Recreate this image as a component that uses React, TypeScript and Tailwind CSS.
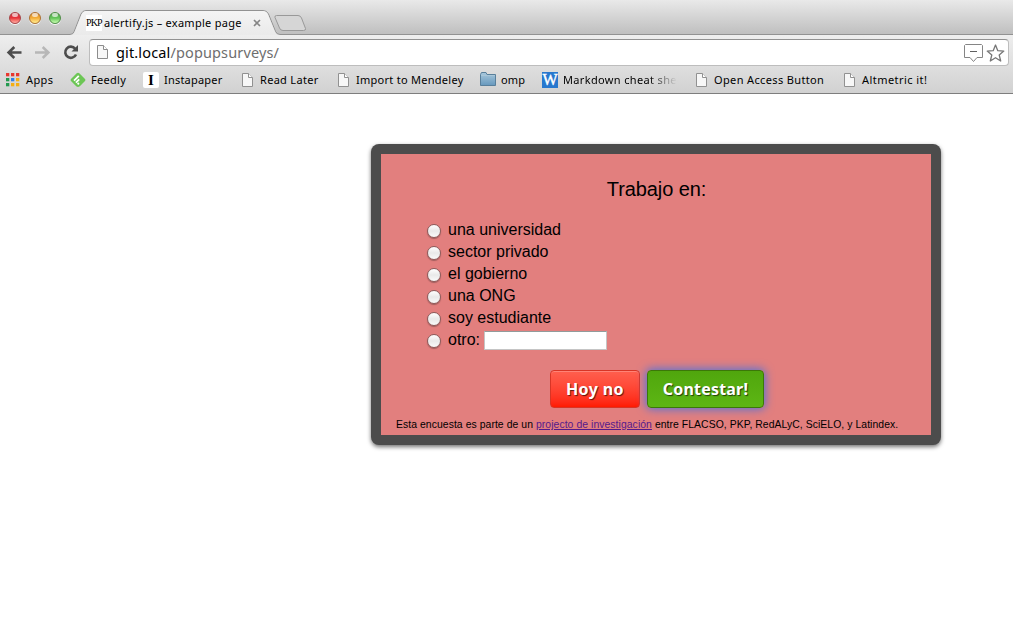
import React from "react";

const ui = "font-['Noto_Sans','Open_Sans',sans-serif]";

function PageIcon({ className = "" }: { className?: string }) {
  return (
    <svg className={`h-4 w-4 shrink-0 ${className}`} viewBox="0 0 16 16">
      <path d="M2.5 1.5H8.5L12.5 5.5V14.5H2.5Z" fill="#f7f7f7" stroke="#919191" />
      <path d="M8.5 1.5V5.5H12.5" fill="#fff" stroke="#919191" />
    </svg>
  );
}

function AppsIcon() {
  const colors = ["#e8382f", "#e8382f", "#e8382f", "#23994f", "#2f80e8", "#f4ae13", "#23994f", "#f4ae13", "#f4ae13"];
  return (
    <svg className="h-4 w-4 shrink-0" viewBox="0 0 16 16">
      {colors.map((c, i) => (
        <rect key={i} x={(i % 3) * 5} y={1 + Math.floor(i / 3) * 5} width="3.3" height="3.3" fill={c} />
      ))}
    </svg>
  );
}

function FeedlyIcon() {
  return (
    <svg className="h-4 w-4 shrink-0" viewBox="0 0 16 16">
      <path d="M6.7 1.3Q8 0.2 9.3 1.3L15 7Q16 8 15 9L9.8 14.3Q9 15 8 15T6.2 14.3L1 9Q0 8 1 7Z" fill="#6cc655" />
      <path d="M4 8.6L8.8 3.8M5.9 10.6L9.2 7.3M7.6 12.3L8.9 11" stroke="#fff" strokeWidth="1.8" />
    </svg>
  );
}

function FolderIcon() {
  return (
    <svg className="h-4 w-4 shrink-0" viewBox="0 0 16 16">
      <defs>
        <linearGradient id="folder" x2="0" y2="1">
          <stop stopColor="#a9c8dc" />
          <stop offset="1" stopColor="#6698bd" />
        </linearGradient>
      </defs>
      <path d="M.5 13.5V2.5L1.5 .5H6L7 2.5H15.5V13.5Z" fill="url(#folder)" stroke="#587f9b" />
      <path d="M1 3.5H15" stroke="#a9c6d8" />
    </svg>
  );
}

function Bookmark({ width, icon, label, text }: { width: string; icon: React.ReactNode; label: string; text: string }) {
  return (
    <div className={`flex h-full shrink-0 items-center ${width}`}>
      {icon}
      <span className={`whitespace-nowrap text-[11px] leading-4 text-black ${text}`}>{label}</span>
    </div>
  );
}

function Light({ color }: { color: string }) {
  return (
    <span className={`relative h-3 w-3 rounded-full border shadow-[0_1px_0_#f6f6f6] ${color}`}>
      <span className="absolute left-[2px] top-0 h-1 w-1.5 rounded-full bg-white/65" />
    </span>
  );
}

function Option({ label, children }: { label: string; children?: React.ReactNode }) {
  return (
    <label className="flex h-[22px] items-center">
      <span className="mt-[3px] h-[14px] w-[14px] rounded-full border border-[#8b5c5c] bg-linear-to-b from-white via-[#e9e9e9] to-[#fafafa] shadow-[0_1px_1px_#a05c5c]" />
      <span className="ml-[7px] mt-[2px] whitespace-nowrap text-[16px] leading-[22px]">{label}</span>
      {children}
    </label>
  );
}

export default function App() {
  return (
    <div className="h-[641px] w-[1013px] overflow-hidden bg-white text-black">
      <header className={`flex h-[94px] flex-col border-b border-[#7e7e7e] ${ui}`}>
        <div className="relative flex h-[35px] shrink-0 bg-linear-to-b from-[#e9e9e9] to-[#bebebe]">
          <svg className="absolute left-0 top-0 h-[35px] w-[1013px]" viewBox="0 0 1013 35" fill="none">
            <defs>
              <linearGradient id="tab" x2="0" y2="1">
                <stop stopColor="#f4f4f4" />
                <stop offset="1" stopColor="#eaeaea" />
              </linearGradient>
            </defs>
            <path d="M0 34.5H70Q73 34.5 74.2 31.5L81 14Q82.5 10.5 86 10.5H263Q267 10.5 268.5 14L275.5 31.5Q277 34.5 280 34.5H1013" fill="none" stroke="#929292" />
            <path d="M70 35Q73 35 74.7 31.5L81.5 14.5Q83 11 86 11H263Q266.5 11 268 14.5L275 31.5Q276.5 35 280 35Z" fill="url(#tab)" />
            <path d="M276.5 15.5H298Q300.5 15.5 301.5 18L305.5 28.5Q306 30.5 303.5 30.5H283Q280.5 30.5 279.5 28L275 17.5Q274.5 15.5 276.5 15.5Z" fill="#d6d6d6" stroke="#999" />
          </svg>
          <div className="relative flex w-full items-start">
            <div className="ml-[9px] mt-3 flex gap-2">
              <Light color="border-[#a84245] bg-linear-to-b from-[#c83d45] via-[#e8303a] to-[#ffaca5]" />
              <Light color="border-[#ae7030] bg-linear-to-b from-[#d18b38] via-[#f5ae36] to-[#ffef91]" />
              <Light color="border-[#4e8d46] bg-linear-to-b from-[#5ba253] via-[#62c659] to-[#c9ffb1]" />
            </div>
            <span className="ml-[25px] mt-[15px] h-4 w-4 whitespace-nowrap bg-white font-['Liberation_Serif',serif] text-[10px] leading-4 tracking-[-0.9px]">PKP</span>
            <span className="ml-[2px] mt-[15px] w-[149px] whitespace-nowrap text-[11px] leading-4 tracking-[0.27px]">alertify.js – example page</span>
            <svg className="mt-[19px] h-2 w-2" viewBox="0 0 8 8"><path d="M1 1L7 7M7 1L1 7" stroke="#858585" strokeWidth="1.7" /></svg>
          </div>
        </div>

        <div className="flex h-[32px] shrink-0 items-start bg-linear-to-b from-[#eeeeee] to-[#dedede] pl-[6px] pr-1 pt-1">
          <svg className="mt-[5px] h-4 w-[80px] shrink-0" viewBox="0 0 80 16" fill="none">
            <path d="M15.5 8.5H3M8.3 3L2.6 8.5L8.3 14" stroke="#4d4d4d" strokeWidth="2.6" />
            <path d="M29 8.5H42M36.700 3L42.400 8.500L36.700 14" stroke="#b7b7b7" strokeWidth="2.5" />
            <path d="M69.2 4.7A5.6 5.6 0 1 0 70 10.5" stroke="#4d4d4d" strokeWidth="2.6" />
            <path d="M72 1V7.5H65.5Z" fill="#4d4d4d" />
          </svg>
          <div className="ml-[3px] flex h-[27px] flex-1 items-center rounded-[4px] border border-[#bdbdbd] border-t-[#919191] bg-white pl-1">
            <svg className="-mt-px ml-[3px] h-4 w-[12px]" viewBox="0 0 12 16">
              <path d="M.5 1.5H6.5L10.5 5.5V14.5H.5Z" fill="#f7f7f7" stroke="#8c8c8c" />
              <path d="M6.5 1.5V5.5H10.5" fill="#fff" stroke="#8c8c8c" />
            </svg>
            <span className="-mt-[2px] ml-[7px] flex-1 whitespace-nowrap text-[14.5px] leading-5 tracking-[0.14px] text-black">git.local<span className="text-[#6e6e6e]">/popupsurveys/</span></span>
            <svg className="mr-[3px] h-5 w-[41px]" viewBox="0 0 41 20" fill="none">
              <path d="M1.5 1.5H17.5L18.5 2.5V14.5H13L9.5 18.5L6 14.5H.5V2.5Z" stroke="#858585" />
              <path d="M6 8.5H13" stroke="#606060" />
              <path d="M31.500 2L33.800 7.700L39.800 8.100L35.200 12L36.700 18L31.500 14.700L26.300 18L27.800 12L23.200 8.100L29.200 7.700Z" stroke="#777" strokeWidth="1.3" strokeLinejoin="round" />
            </svg>
          </div>
        </div>

        <nav className="flex h-[26px] shrink-0 items-center overflow-hidden bg-linear-to-b from-[#dedede] to-[#d1d1d1] pl-[6px]">
          <Bookmark width="w-[64px]" icon={<AppsIcon />} label="Apps" text="ml-1 tracking-[0.4px]" />
          <Bookmark width="w-[73px]" icon={<FeedlyIcon />} label="Feedly" text="ml-[5px] tracking-[0.3px]" />
          <Bookmark width="w-[97px]" icon={<span className="h-4 w-4 shrink-0 rounded-[2px] bg-white text-center font-['Liberation_Serif',serif] text-[15px] font-bold leading-4">I</span>} label="Instapaper" text="ml-[5px] tracking-[0.2px]" />
          <Bookmark width="w-[96px]" icon={<PageIcon />} label="Read Later" text="ml-1 tracking-[0.3px]" />
          <Bookmark width="w-[144px]" icon={<PageIcon />} label="Import to Mendeley" text="ml-1 tracking-[0.27px]" />
          <Bookmark width="w-[62px]" icon={<FolderIcon />} label="omp" text="ml-[5px] tracking-[0.2px]" />
          <Bookmark width="w-[152px]" icon={<span className="flex h-4 w-4 shrink-0 items-center justify-center bg-[#2878ce] font-['Liberation_Serif',serif] text-[16px] leading-4 text-white [-webkit-text-stroke:0.4px_white]">W</span>} label="Markdown cheat sheet" text="ml-[5px] w-[114px] overflow-hidden tracking-[0.35px] [mask-image:linear-gradient(to_right,black_75%,transparent)]" />
          <Bookmark width="w-[148px]" icon={<PageIcon />} label="Open Access Button" text="ml-1 tracking-[0.36px]" />
          <Bookmark width="w-[120px]" icon={<PageIcon />} label="Altmetric it!" text="ml-1 tracking-[0.45px]" />
        </nav>
      </header>

      <main className="pl-[371px] pt-[50px]">
        <section className="flex h-[301px] w-[570px] flex-col rounded-[8px] bg-[#4c4c4c] p-[10px] font-['Liberation_Sans',sans-serif] shadow-[0_2px_4px_rgba(0,0,0,0.55)]">
          <div className="flex h-[281px] flex-col bg-[#e27f7e]">
            <h1 className="mt-[23px] pl-px text-center text-[20px] leading-6 tracking-[-0.1px]">Trabajo en:</h1>
            <div className="ml-[46px] mt-[17px] flex flex-col">
              <Option label="una universidad" />
              <Option label="sector privado" />
              <Option label="el gobierno" />
              <Option label="una ONG" />
              <Option label="soy estudiante" />
              <Option label="otro:">
                <input aria-label="otro" className="ml-1 mt-[3px] h-[19px] w-[123px] border border-[#c5c5c5] border-t-[#929b9b] bg-white outline-none" />
              </Option>
            </div>
            <div className={`ml-[169px] mt-[20px] flex gap-[7px] text-[16px] font-bold text-white ${ui}`}>
              <button className="h-[38px] w-[90px] whitespace-nowrap rounded-[4px] border border-[#d83526] bg-linear-to-b from-[#ff5f4e] to-[#ff1a00] tracking-[0.4px] shadow-[inset_0_1px_0_#ff8376] [text-shadow:1px_1px_1px_rgba(0,0,0,0.65)]">Hoy no</button>
              <button className="h-[38px] w-[117px] whitespace-nowrap rounded-[4px] border border-[#3b7808] bg-linear-to-b from-[#50a60d] to-[#5db614] tracking-[0.2px] shadow-[0_0_10px_1px_#4c72db] [text-shadow:1px_1px_1px_rgba(0,0,0,0.65)]">Contestar!</button>
            </div>
            <p className="ml-[15px] mt-[9px] whitespace-nowrap text-[10.4px] leading-4 tracking-[0.065px]">Esta encuesta es parte de un <a className="text-[#551a8b] underline">projecto de investigación</a> entre FLACSO, PKP, RedALyC, SciELO, y Latindex.</p>
          </div>
        </section>
      </main>
    </div>
  );
}
